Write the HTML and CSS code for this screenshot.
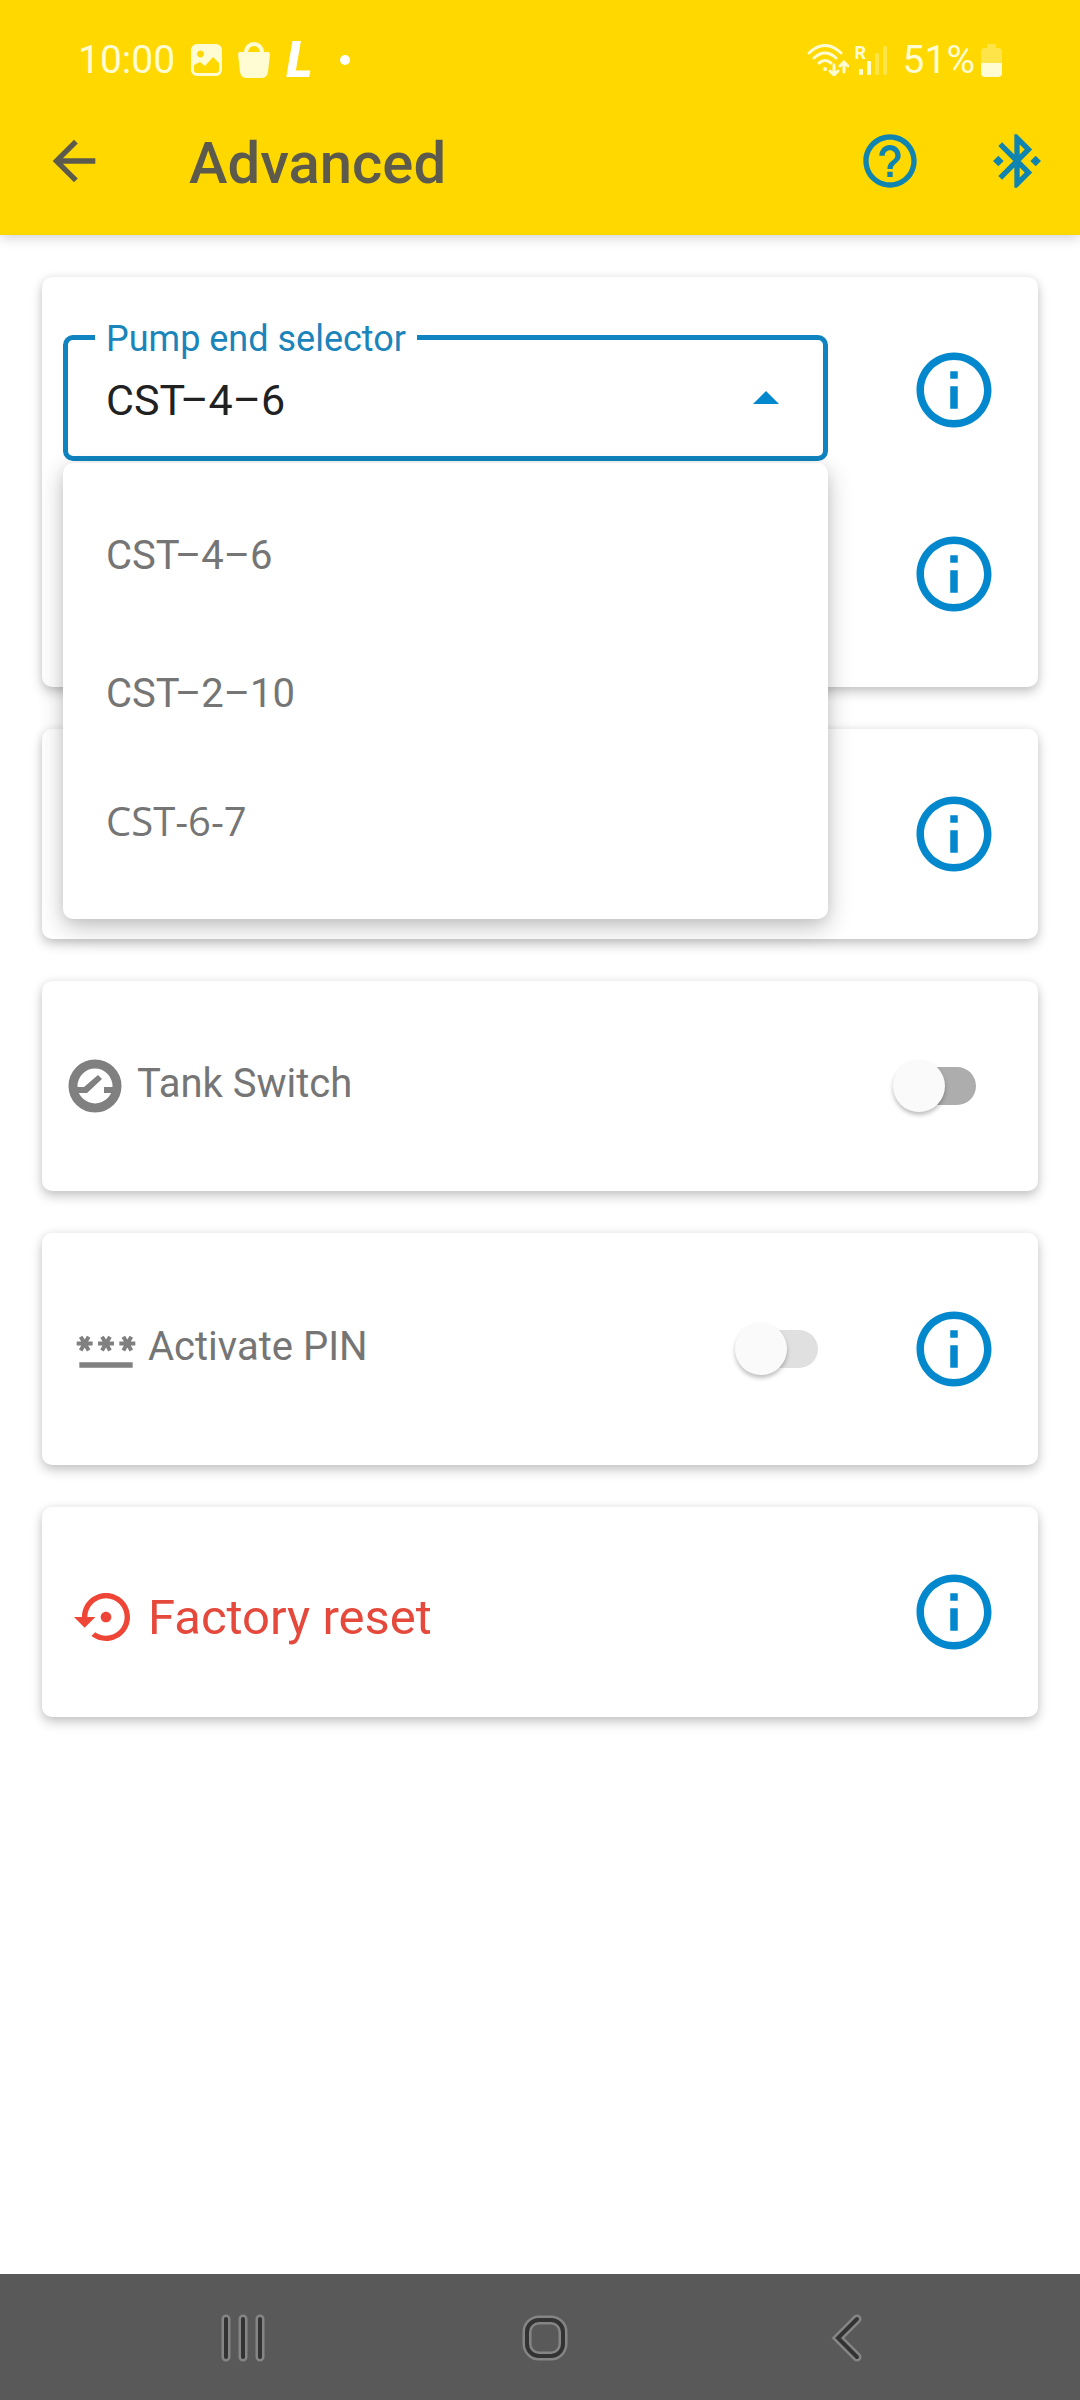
FILE: index.html
```html
<!DOCTYPE html>
<html lang="en">
<head>
    <meta charset="UTF-8">
    <meta name="viewport" content="width=device-width, initial-scale=1.0">
    <title>Advanced</title>
    <link rel="stylesheet" href="styles.css">
</head>
<body>
    <!-- shared icons -->
    <svg class="sprite" aria-hidden="true">
        <symbol id="icon-info" viewBox="0 0 24 24">
            <path d="M11 7h2v2h-2zm0 4h2v6h-2zm1-9C6.48 2 2 6.48 2 12s4.48 10 10 10 10-4.48 10-10S17.52 2 12 2zm0 18c-4.41 0-8-3.59-8-8s3.59-8 8-8 8 3.59 8 8-3.59 8-8 8z"/>
        </symbol>
    </svg>

    <header class="header">
        <div class="statusBar">
            <span class="clock">10:00</span>
            <svg class="statusIcon" width="31" height="32" viewBox="0 0 31 32">
                <path fill-rule="evenodd" d="M6 0h19a6 6 0 0 1 6 6v20a6 6 0 0 1-6 6H6a6 6 0 0 1-6-6V6a6 6 0 0 1 6-6zM3 21v5a3 3 0 0 0 3 3h19a3 3 0 0 0 3-3v-7l-6-6-8 9-5-4zM9.500 6.500a3.500 3.500 0 1 0 .01 0z"/>
            </svg>
            <svg class="statusIcon" width="32" height="36" viewBox="0 0 32 36">
                <path d="M1 10h30l1 2-2 18q-1 6-7 6H9q-6 0-7-6L0 12z"/>
                <path class="line" d="M8 11c0-12 16-12 16 0" stroke-width="4"/>
            </svg>
            <span class="appLetter">L</span>
            <span class="dot"></span>
            <span class="spacer"></span>
            <svg class="statusIcon" width="42" height="32" viewBox="0 0 42 32">
                <g class="line" stroke-width="3">
                    <path d="M2 9q16-15 32 0M7 14q11-10 22 0M12 19q6-5 12 0"/>
                    <path d="M27 21v9M23 27l4 4 4-4M37 28v-9M33 22l4-4 4 4"/>
                </g>
                <circle cx="18" cy="25" r="2"/>
            </svg>
            <div class="signal">
                <span>R</span>
                <svg class="statusIcon" width="32" height="32" viewBox="0 0 32 32">
                    <rect x="4" y="25" width="4" height="6" rx="1"/>
                    <rect x="12" y="17" width="4" height="14" rx="1"/>
                    <rect class="faded" x="20" y="9" width="4" height="22" rx="1"/>
                    <rect class="faded" x="28" y="2" width="4" height="29" rx="1"/>
                </svg>
            </div>
            <span class="battery">
                <span>51%</span>
                <svg class="statusIcon" width="21" height="33" viewBox="0 0 21 33">
                    <path class="faded" d="M6 0h9v4h2q4 0 4 4v11H0V8q0-4 4-4h2z"/>
                    <path d="M0 19h21v10q0 4-4 4H4q-4 0-4-4z"/>
                </svg>
            </span>
        </div>
        <div class="toolbar">
            <button class="iconButton backButton" aria-label="Back">
                <svg width="64" height="64" viewBox="0 0 24 24"><path d="M20 11H7.830l5.590-5.590L12 4l-8 8 8 8 1.410-1.410L7.830 13H20v-2z"/></svg>
            </button>
            <h1>Advanced</h1>
            <button class="iconButton" aria-label="Help">
                <svg width="64" height="64" viewBox="0 0 24 24"><path d="M11 18h2v-2h-2v2zm1-16C6.48 2 2 6.48 2 12s4.48 10 10 10 10-4.48 10-10S17.520 2 12 2zm0 18c-4.410 0-8-3.590-8-8s3.590-8 8-8 8 3.590 8 8-3.590 8-8 8zm0-14c-2.210 0-4 1.790-4 4h2c0-1.100.9-2 2-2s2 .9 2 2c0 2-3 1.750-3 5h2c0-2.250 3-2.500 3-5 0-2.210-1.790-4-4-4z"/></svg>
            </button>
            <button class="iconButton" aria-label="Bluetooth">
                <svg width="64" height="64" viewBox="0 0 24 24"><path d="M7 12l-2-2-2 2 2 2 2-2zm10.710-4.290L12 2h-1v7.590L6.410 5 5 6.410 10.590 12 5 17.590 6.410 19 11 14.410V22h1l5.710-5.710-4.300-4.290 4.300-4.290zM13 5.830l1.880 1.880L13 9.590V5.830zm1.880 10.460L13 18.170v-3.760l1.880 1.880zM19 10l-2 2 2 2 2-2-2-2z"/></svg>
            </button>
        </div>
    </header>

    <main class="content">
        <section class="card cardPump">
            <div class="row">
                <div class="selectBox">
                    <fieldset>
                        <legend><label for="pumpEnd">Pump end selector</label></legend>
                        <div class="selectLine">
                            <select id="pumpEnd" name="pumpEnd">
                                <option selected>CST–4–6</option>
                                <option>CST–2–10</option>
                                <option>CST-6-7</option>
                            </select>
                            <svg class="caret" width="26" height="13" viewBox="0 0 26 13"><path d="M0 13L13 0l13 13z"/></svg>
                        </div>
                    </fieldset>
                    <div class="menu">
                        <button type="button">CST–4–6</button>
                        <button type="button">CST–2–10</button>
                        <button type="button" class="menuLast">CST-6-7</button>
                    </div>
                </div>
                <button class="infoButton" aria-label="Pump end selector info"><svg><use href="#icon-info"/></svg></button>
            </div>
            <div class="row">
                <button class="infoButton" aria-label="Info"><svg><use href="#icon-info"/></svg></button>
            </div>
        </section>

        <section class="card">
            <button class="infoButton" aria-label="Info"><svg><use href="#icon-info"/></svg></button>
        </section>

        <section class="card cardTank">
            <svg class="rowIcon" viewBox="0 0 64 64">
                <circle cx="32" cy="32" r="22" fill="none" stroke="currentColor" stroke-width="9"/>
                <path d="M12 33h9l14-12 4 4-15 14H12zM41 33h11v6H41z"/>
            </svg>
            <label class="rowLabel" for="tankSwitch">Tank Switch</label>
            <input type="checkbox" class="switch" id="tankSwitch">
        </section>

        <section class="card cardPin">
            <svg class="rowIcon" viewBox="0 0 24 24"><path d="M2 17h20v2H2v-2zm1.150-4.050L4 11.470l.85 1.480 1.300-.75-.85-1.480H7v-1.500H5.300l.85-1.470L4.850 7 4 8.470 3.150 7l-1.300.75.85 1.470H1v1.500h1.700l-.85 1.480 1.300.75zm6.700-.75l1.300.75.85-1.480.85 1.480 1.300-.75-.85-1.480H15v-1.500h-1.700l.85-1.470-1.300-.75L12 8.470 11.150 7l-1.300.75.85 1.470H9v1.500h1.700l-.85 1.480zM23 9.220h-1.700l.85-1.470-1.300-.75L20 8.470 19.150 7l-1.300.75.85 1.470H17v1.500h1.700l-.85 1.480 1.300.75.85-1.480.85 1.480 1.300-.75-.85-1.480H23v-1.500z"/></svg>
            <label class="rowLabel" for="activatePin">Activate PIN</label>
            <input type="checkbox" class="switch" id="activatePin" disabled>
            <button class="infoButton" aria-label="Activate PIN info"><svg><use href="#icon-info"/></svg></button>
        </section>

        <section class="card">
            <button class="resetButton">
                <svg class="rowIcon" viewBox="0 0 24 24"><path d="M14 12c0-1.100-.9-2-2-2s-2 .9-2 2 .9 2 2 2 2-.9 2-2zm-2-9c-4.970 0-9 4.030-9 9H0l4 4 4-4H5c0-3.870 3.130-7 7-7s7 3.130 7 7-3.130 7-7 7c-1.510 0-2.910-.49-4.060-1.300l-1.420 1.440C8.040 20.300 9.940 21 12 21c4.970 0 9-4.030 9-9s-4.030-9-9-9z"/></svg>
                <span>Factory reset</span>
            </button>
            <button class="infoButton" aria-label="Factory reset info"><svg><use href="#icon-info"/></svg></button>
        </section>
    </main>

    <nav class="navBar">
        <button aria-label="Recent apps">
            <svg width="48" height="52" viewBox="0 0 48 52">
                <path class="halo" d="M7 7v38M24 7v38M41 7v38"/>
                <path class="stroke" d="M7 7v38M24 7v38M41 7v38"/>
            </svg>
        </button>
        <button aria-label="Home">
            <svg width="52" height="52" viewBox="0 0 52 52">
                <rect class="halo" x="8" y="8" width="36" height="36" rx="12"/>
                <rect class="stroke" x="8" y="8" width="36" height="36" rx="12"/>
            </svg>
        </button>
        <button aria-label="Back">
            <svg width="36" height="52" viewBox="0 0 36 52">
                <path class="halo" d="M28 7L9 26l19 19"/>
                <path class="stroke" d="M28 7L9 26l19 19"/>
            </svg>
        </button>
    </nav>
</body>
</html>
```

FILE: styles.css
```css
* {
    box-sizing: border-box;
}

body {
    display: flex;
    flex-direction: column;
    min-height: 100vh;
    margin: 0;
    background-color: #fff;
    color: #757575;
    font-family: Roboto, Arial, sans-serif;
    font-size: 40px;
}

button {
    padding: 0;
    border: none;
    background: none;
    color: inherit;
    font: inherit;
    cursor: pointer;
}

svg {
    display: block;
    flex-shrink: 0;
    fill: currentColor;
}

.sprite {
    position: absolute;
    width: 0;
    height: 0;
}

/* Header */
.header {
    background-color: #ffd800;
    box-shadow: 0 2px 12px rgba(0, 0, 0, 0.2);
}

.statusBar {
    display: flex;
    align-items: center;
    gap: 16px;
    padding: 36px 78px 3px;
    line-height: 48px;
    color: #fffbd2;
    font-size: 39px;
}

.statusIcon .line {
    fill: none;
    stroke: currentColor;
    stroke-linecap: round;
}

.faded {
    opacity: 0.35;
}

.appLetter {
    color: #fff;
    font-size: 50px;
    font-style: italic;
    font-weight: 900;
}

.dot {
    width: 10px;
    height: 10px;
    margin-left: 12px;
    border-radius: 50%;
    background-color: #fff;
}

.spacer {
    flex: 1;
}

/* roaming letter shares the grid cell with the bars */
.signal {
    display: grid;
    margin-left: -10px;
    font-size: 18px;
    font-weight: 700;
    line-height: 18px;
}

.signal > * {
    grid-area: 1 / 1;
}

.battery {
    display: flex;
    align-items: center;
    gap: 6px;
}

.toolbar {
    display: flex;
    align-items: center;
    height: 148px;
    padding: 0 31px 0 42px;
}

.toolbar h1 {
    flex: 1;
    margin: 0;
    padding: 4px 0 0 83px;
    color: #5b5a4c;
    font-size: 58px;
    font-weight: 500;
}

.iconButton {
    color: #0f84b0;
}

.iconButton + .iconButton {
    margin-left: 63px;
}

.backButton {
    color: #5b5a4c;
}

/* Cards */
.content {
    display: flex;
    flex: 1;
    flex-direction: column;
    gap: 42px;
    padding: 42px;
}

.card {
    display: flex;
    align-items: center;
    min-height: 210px;
    padding: 0 39px 0 21px;
    border-radius: 10px;
    background-color: #fff;
    box-shadow: 0 5px 12px rgba(0, 0, 0, 0.22), 0 0 8px rgba(0, 0, 0, 0.06);
}

.cardPump {
    flex-direction: column;
    align-items: stretch;
    padding-top: 21px;
    padding-bottom: 21px;
}

.cardTank {
    padding-right: 62px;
}

.cardPin {
    min-height: 232px;
    padding-left: 32px;
}

.row {
    display: flex;
    align-items: center;
    height: 184px;
}

.rowIcon {
    width: 64px;
    height: 64px;
    color: #808080;
}

.rowLabel {
    flex: 1;
    padding: 0 0 6px 10px;
}

.infoButton {
    margin-left: auto;
    color: #0388cd;
}

.infoButton svg {
    width: 90px;
    height: 90px;
}

.resetButton {
    display: flex;
    align-items: center;
    gap: 10px;
    padding: 10px 0 0 11px;
    color: #e5493c;
    font-size: 49px;
}

.resetButton .rowIcon {
    color: #ee4537;
}

/* Drop-down */
.selectBox {
    position: relative;
    flex: 1;
    margin-right: 81px;
}

fieldset {
    min-width: 0;
    margin: 0;
    padding: 0 44px 12px 27px;
    border: 5px solid #0f84c0;
    border-radius: 10px;
}

legend {
    padding: 3px 11px 0;
    color: #1a84bb;
    font-size: 36px;
    line-height: 34px;
}

.selectLine {
    display: flex;
    align-items: center;
}

select {
    flex: 1;
    height: 88px;
    padding: 0 11px;
    border: none;
    outline: none;
    appearance: none;
    background: none;
    color: #212121;
    font: inherit;
    font-size: 43px;
}

.caret {
    margin-bottom: 6px;
    color: #0388cd;
}

.menu {
    position: absolute;
    top: calc(100% + 2px);
    left: 0;
    right: 0;
    z-index: 1;
    display: flex;
    flex-direction: column;
    padding: 23px 0 41px;
    border-radius: 10px;
    background-color: #fff;
    box-shadow: 0 8px 24px rgba(0, 0, 0, 0.24), 0 2px 12px rgba(0, 0, 0, 0.06);
}

.menu button {
    height: 138px;
    padding: 0 43px;
    text-align: left;
}

.menu .menuLast {
    height: 116px;
    font-family: "Open Sans", sans-serif;
}

/* Switches */
.switch {
    display: flex;
    align-items: center;
    width: 76px;
    height: 38px;
    margin: 0;
    border-radius: 19px;
    appearance: none;
    background-color: #adadad;
}

.switch::before {
    content: "";
    width: 52px;
    height: 52px;
    margin-left: -7px;
    flex-shrink: 0;
    border-radius: 50%;
    background-color: #fafafa;
    box-shadow: 0 3px 4px rgba(0, 0, 0, 0.25);
}

.switch:checked {
    flex-direction: row-reverse;
    background-color: #81c3e6;
}

.switch:disabled {
    background-color: #e0e0e0;
}

.switch + .infoButton {
    margin-left: 91px;
}

/* System navigation */
.navBar {
    display: flex;
    justify-content: center;
    gap: 2px;
    height: 126px;
    padding: 2px 0 0 10px;
    background-color: #595959;
}

.navBar button {
    display: flex;
    align-items: center;
    justify-content: center;
    width: 28%;
}

.navBar svg {
    fill: none;
    stroke-linecap: round;
}

.halo {
    stroke: #858585;
    stroke-width: 9;
}

.stroke {
    stroke: #333;
    stroke-width: 4;
}
```
